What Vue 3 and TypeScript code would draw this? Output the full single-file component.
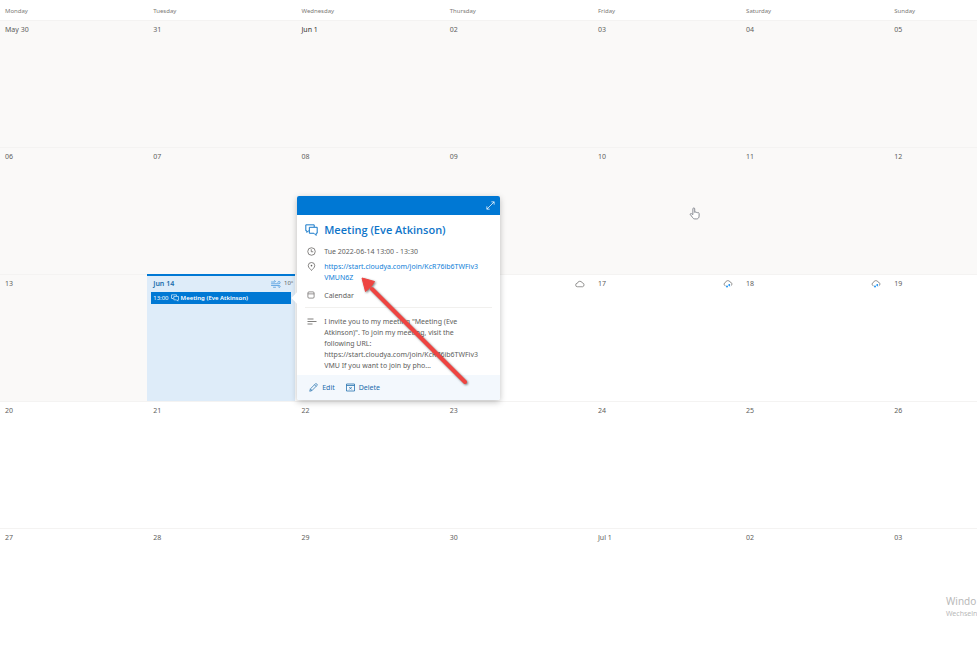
<script setup lang="ts">
type Weather = 'wind' | 'cloud' | 'rain'

interface Day {
  label: string
  past?: boolean
  strong?: boolean
  today?: boolean
  weather?: Weather
}

const weekdays: string[] = ['Monday', 'Tuesday', 'Wednesday', 'Thursday', 'Friday', 'Saturday', 'Sunday']

const past = (labels: string[]): Day[] => labels.map((label) => ({ label, past: true }))
const plain = (labels: string[]): Day[] => labels.map((label) => ({ label }))

const days: Day[] = [
  ...past(['May 30', '31']),
  { label: 'Jun 1', past: true, strong: true },
  ...past(['02', '03', '04', '05']),
  ...past(['06', '07', '08', '09', '10', '11', '12', '13']),
  { label: 'Jun 14', today: true, weather: 'wind' },
  { label: '15' },
  { label: '16', weather: 'cloud' },
  { label: '17', weather: 'rain' },
  { label: '18', weather: 'rain' },
  { label: '19' },
  ...plain(['20', '21', '22', '23', '24', '25', '26']),
  ...plain(['27', '28', '29', '30', 'Jul 1', '02', '03']),
]

const joinUrl = 'https://start.cloudya.com/join/KcR76ib6TWFiv3VMUN6Z'
const joinLines: string[] = ['https://start.cloudya.com/join/KcR76ib6TWFiv3', 'VMUN6Z']
const noteLines: string[] = [
  'I invite you to my meeting "Meeting (Eve',
  'Atkinson)". To join my meeting, visit the',
  'following URL:',
  'https://start.cloudya.com/join/KcR76ib6TWFiv3',
  'VMU If you want to join by pho...',
]
</script>

<template>
  <main class="page">
    <div class="board">
      <div class="weekdays">
        <div v-for="name in weekdays" :key="name" class="weekday">{{ name }}</div>
      </div>
      <div class="days">
        <section
          v-for="(day, i) in days"
          :key="i"
          class="day"
          :class="{ past: day.past, today: day.today }"
        >
          <header class="day-head">
            <span class="date" :class="{ strong: day.strong }">{{ day.label }}</span>
            <span v-if="day.weather" class="weather">
              <svg v-if="day.weather === 'wind'" class="wx" viewBox="0 0 20 16" fill="none" stroke="#2b88d8" stroke-width="1.3" stroke-linecap="round">
                <path d="M1 7.500h15a2.300 2.300 0 1 0-2.300-2.800M1 11h15.500a1.900 1.900 0 1 1-1.900 2.500" />
                <path d="M1 4h6.500a1.300 1.300 0 1 0-1.300-2M5 14.500h4" />
              </svg>
              <svg v-else class="wx" viewBox="0 0 20 16" fill="none" stroke="#605e5c" stroke-width="1.3">
                <path v-if="day.weather === 'cloud'" d="M5 13.500a3.500 3.500 0 0 1-.3-7A5.300 5.300 0 0 1 14.800 6 3.800 3.800 0 0 1 15 13.500Z" />
                <template v-else>
                  <path d="M5 11.500a3.200 3.200 0 0 1-.3-6.300A5.300 5.300 0 0 1 14.800 4.700a3.500 3.500 0 0 1 1.200 6.600" />
                  <circle cx="8" cy="13" r="1.900" fill="#1890f1" stroke="none" />
                  <circle cx="12.500" cy="10" r="1.900" fill="#1890f1" stroke="none" />
                  <path d="M13.500 13v1" stroke="#1890f1" />
                </template>
              </svg>
              <span v-if="day.today" class="temp">10°</span>
            </span>
          </header>

          <template v-if="day.today">
            <button type="button" class="event">
              <span>13:00</span>
              <svg class="event-icon" viewBox="0 0 24 22" fill="none" stroke="currentColor" stroke-width="1.8" stroke-linejoin="round">
                <path d="M8 11H6l-3 3v-3H1.500V1.500h15V5" />
                <path d="M8.500 6.500h14v10h-2v4l-4-4h-8Z" />
              </svg>
              <strong>Meeting (Eve Atkinson)</strong>
            </button>

            <article class="card">
              <div class="beak"></div>
              <div class="card-bar">
                <button type="button" class="expand" aria-label="Expand">
                  <svg class="expand-icon" viewBox="0 0 16 16" fill="none" stroke="currentColor" stroke-width="1.3">
                    <path d="M9.500 1.500h5v5M14.500 1.500L1.500 14.500M6.500 14.500h-5v-5" />
                  </svg>
                </button>
              </div>
              <div class="card-body">
                <div class="row title-row">
                  <svg class="title-icon" viewBox="0 0 24 22" fill="none" stroke="currentColor" stroke-width="1.8" stroke-linejoin="round">
                    <path d="M8 12.500H6.500l-3 3v-3H1.500v-11h15.500V5.500" />
                    <path d="M8 6h14.500v11h-2v4l-4-4H8Z" />
                  </svg>
                  <h1 class="title">Meeting (Eve Atkinson)</h1>
                </div>
                <div class="row">
                  <svg class="icon" viewBox="0 0 18 18" fill="none" stroke="currentColor" stroke-width="1.5">
                    <circle cx="9" cy="9" r="7.500" /><path d="M8.500 4.500V9.500H12.500" />
                  </svg>
                  <span>Tue 2022-06-14 13:00 - 13:30</span>
                </div>
                <div class="row place">
                  <svg class="icon" viewBox="0 0 18 18" fill="none" stroke="currentColor" stroke-width="1.5">
                    <path d="M9 17c-1.500-2.500-6.500-5.500-6.500-9.700a6.500 6.300 0 0 1 13 0C15.500 11.500 10.500 14.500 9 17Z" />
                    <circle cx="9" cy="7.300" r="1.600" fill="currentColor" stroke="none" />
                  </svg>
                  <a class="join" :href="joinUrl"><span v-for="line in joinLines" :key="line" class="line">{{ line }}</span></a>
                </div>
                <div class="row calendar">
                  <svg class="icon small" viewBox="0 0 18 18" fill="none" stroke="currentColor" stroke-width="1.5">
                    <rect x="2" y="2" width="14" height="14" rx="2.500" /><path d="M2 6.500h14" />
                  </svg>
                  <span>Calendar</span>
                </div>
                <div class="row note">
                  <svg class="note-icon" viewBox="0 0 20 14" fill="none" stroke="currentColor" stroke-width="1.6">
                    <path d="M1 2h12M1 7h18M1 12h10" />
                  </svg>
                  <p class="text"><span v-for="line in noteLines" :key="line" class="line">{{ line }}</span></p>
                </div>
              </div>
              <footer class="actions">
                <button type="button" class="action">
                  <svg class="action-icon" viewBox="0 0 18 18" fill="none" stroke="currentColor" stroke-width="1.4" stroke-linejoin="round">
                    <path d="M1.500 16.500l1.300-4.800L12.500 2a2.200 2.200 0 0 1 3.200 0 2.200 2.200 0 0 1 0 3.200L6 15Z" /><path d="M11 3.500L14.300 6.800M2.800 11.700L6 15" />
                  </svg>
                  Edit
                </button>
                <button type="button" class="action">
                  <svg class="action-icon" viewBox="0 0 18 18" fill="none" stroke="currentColor" stroke-width="1.5">
                    <path d="M1 2h16v14H1ZM1 5h16M6.500 8l5 5M11.500 8l-5 5" />
                  </svg>
                  Delete
                </button>
              </footer>
              <svg class="pointer" viewBox="0 0 112 112">
                <path d="M13 13L106 106" stroke="#ee4441" stroke-width="4" stroke-linecap="round" />
                <path d="M3 2L15.500 5.500 12.500 10 10 12.500 6.500 15.500Z" fill="#ee4441" stroke="#ee4441" stroke-linejoin="round" />
              </svg>
            </article>
          </template>
        </section>
      </div>
    </div>

    <svg class="cursor" viewBox="0 0 20 24" fill="#fff" stroke="#777b84" stroke-width="1.6" stroke-linejoin="round">
      <path d="M7 14V3.500a1.700 1.700 0 0 1 3.400 0V10l1-.8 1.800.8 1.400-.3 1.200.9 1.400-.2 1.300 1.200v5.200c0 3-2 5.200-4.500 5.200h-3.500c-2 0-3.200-1-4.200-2.800L2 13.500c0-1.500 2-1.700 3-.8Z" />
    </svg>

    <aside class="activation">
      <p class="activation-title">Windo</p>
      <p class="activation-text">Wechseln</p>
    </aside>
  </main>
</template>

<style>
body {
  margin: 0;
}
</style>

<style scoped>
.page {
  position: relative;
  height: 100vh;
  overflow: hidden;
  background: #fff;
  color: #605e5c;
  font: 7px/11px "Noto Sans", "Open Sans", sans-serif;
}

.board {
  width: 106.2%;
  margin-left: -1px;
}

.weekdays,
.days {
  display: grid;
  grid-template-columns: repeat(7, 1fr);
}

.weekday {
  padding: 6px 6px 3px;
  color: #7c7a77;
  font-size: 6px;
  line-height: 11px;
}

.days {
  grid-auto-rows: minmax(127px, auto);
}

.day {
  position: relative;
  box-sizing: border-box;
  min-width: 0;
  border-top: 1px solid #f4f3f2;
}

.past {
  background: #faf9f8;
}

.today {
  background: #deecf9;
  border-top: 2px solid #0078d4;
}

.day-head {
  display: flex;
  justify-content: space-between;
  height: 11px;
  padding: 3px 7px 0 6px;
}

.today .day-head {
  padding: 2px 2px 0 6px;
}

.strong {
  color: #33312f;
}

.today .date {
  color: #1b6cab;
  font-weight: 600;
}

.weather {
  display: flex;
  align-items: center;
  gap: 3px;
}

.wx {
  width: 10px;
  height: 8px;
}

.temp {
  font-size: 6px;
}

button {
  margin: 0;
  border: 0;
  background: none;
  font: inherit;
  cursor: pointer;
}

.event {
  display: flex;
  align-items: center;
  gap: 2px;
  width: calc(100% - 8px);
  height: 12px;
  margin: 3px 4px 0;
  padding: 0 2px;
  background: #0078d4;
  color: #fff;
  font-size: 6px;
  white-space: nowrap;
}

.event strong {
  font-weight: 600;
}

.event-icon {
  width: 8px;
  height: 8px;
}

.card {
  position: absolute;
  z-index: 2;
  top: -80px;
  left: 150px;
  width: 203px;
  border-radius: 2px;
  background: #fff;
  box-shadow: 0 2px 6px rgba(0, 0, 0, 0.25);
}

.beak {
  position: absolute;
  top: 98px;
  left: -4px;
  width: 8px;
  height: 8px;
  background: #fff;
  transform: rotate(45deg);
}

.card-bar {
  display: flex;
  justify-content: flex-end;
  align-items: center;
  height: 19px;
  padding-right: 5px;
  border-radius: 2px 2px 0 0;
  background: #0078d4;
}

.expand {
  display: flex;
  padding: 0;
  color: #fff;
}

.expand-icon {
  width: 9px;
  height: 9px;
}

.card-body {
  padding: 6px 8px 4px;
}

.row {
  display: grid;
  grid-template-columns: 14px 1fr;
  column-gap: 5px;
  white-space: nowrap;
}

.title-row {
  align-items: center;
  margin-bottom: 7px;
  color: #0f75c9;
}

.title {
  margin: 0;
  font-family: "Open Sans", "Noto Sans", sans-serif;
  font-size: 11px;
  font-weight: 600;
  line-height: 18px;
}

.title-icon {
  width: 13px;
  height: 12px;
}

.icon {
  width: 9px;
  height: 9px;
  margin: 1px 2px;
}

.small {
  width: 8px;
  height: 8px;
}

.place {
  margin-top: 4px;
}

.join {
  color: #1080d8;
  text-decoration: none;
}

.line {
  display: block;
}

.calendar {
  margin-top: 7px;
  padding-bottom: 6px;
  border-bottom: 1px solid #f1f0ee;
}

.note {
  margin-top: 8px;
}

.note-icon {
  width: 10px;
  height: 7px;
  margin: 2px;
}

.text {
  margin: 0;
}

.actions {
  display: flex;
  gap: 11px;
  padding: 7px 12px;
  border-radius: 0 0 2px 2px;
  background: #f3f8fd;
}

.action {
  display: flex;
  align-items: center;
  gap: 4px;
  padding: 0;
  color: #1b6cab;
}

.action-icon {
  width: 9px;
  height: 9px;
}

.pointer {
  position: absolute;
  top: 80px;
  left: 62px;
  width: 112px;
  height: 112px;
  filter: drop-shadow(1px 1px 1px rgba(0, 0, 0, 0.5));
  pointer-events: none;
}

.cursor {
  position: absolute;
  top: 207px;
  left: 689px;
  width: 11px;
  height: 13px;
}

.activation {
  position: absolute;
  bottom: 30px;
  left: 946px;
  color: #b9b9b9;
  white-space: nowrap;
}

.activation p {
  margin: 0;
}

.activation-title {
  font-size: 10px;
  line-height: 13px;
}

.activation-text {
  font-size: 7px;
  line-height: 11px;
}
</style>
